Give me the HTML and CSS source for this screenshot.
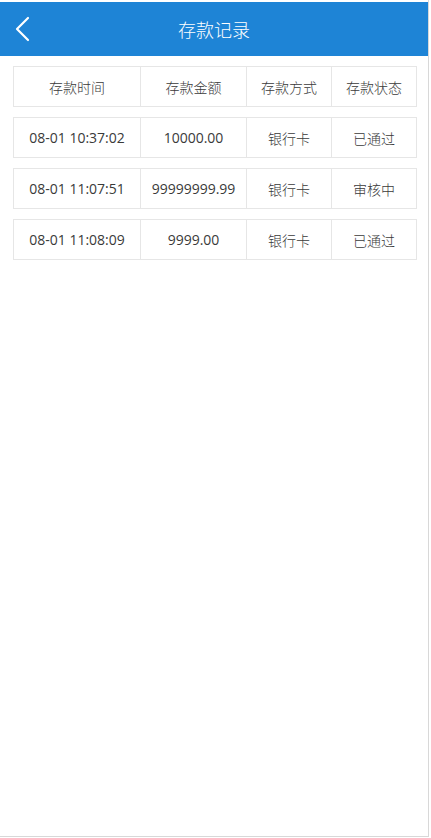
FILE: index.html
```html
<!DOCTYPE html>
<html lang="zh-CN">
<head>
    <meta charset="UTF-8">
    <meta name="viewport" content="width=device-width, initial-scale=1.0">
    <title>存款记录</title>
    <link rel="stylesheet" href="styles.css">
</head>
<body>
    <div class="page">
        <header class="topbar">
            <a class="back" href="#">
                <svg width="16" height="26" viewBox="0 0 16 26"><path d="M14 2 L3 13 L14 24" fill="none" stroke="#fff" stroke-width="2.2" stroke-linecap="round" stroke-linejoin="round"/></svg>
            </a>
            <h1>存款记录</h1>
        </header>

        <div class="records">
            <div class="row head">
                <div class="cell c1">存款时间</div>
                <div class="cell c2">存款金额</div>
                <div class="cell c3">存款方式</div>
                <div class="cell c4">存款状态</div>
            </div>
            <div class="row">
                <div class="cell c1">08-01 10:37:02</div>
                <div class="cell c2">10000.00</div>
                <div class="cell c3">银行卡</div>
                <div class="cell c4">已通过</div>
            </div>
            <div class="row">
                <div class="cell c1">08-01 11:07:51</div>
                <div class="cell c2">99999999.99</div>
                <div class="cell c3">银行卡</div>
                <div class="cell c4">审核中</div>
            </div>
            <div class="row">
                <div class="cell c1">08-01 11:08:09</div>
                <div class="cell c2">9999.00</div>
                <div class="cell c3">银行卡</div>
                <div class="cell c4">已通过</div>
            </div>
        </div>
    </div>
</body>
</html>
```

FILE: styles.css
```css
body {
    margin: 0;
    padding: 0;
    background-color: #fff;
    font-family: "Open Sans", "Noto Sans CJK SC", sans-serif;
    color: #3a3a3a;
}
.page {
    width: 429px;
    height: 837px;
    border-right: 1px solid #d8d8d8;
    border-bottom: 1px solid #d8d8d8;
    padding-top: 2px;
    box-sizing: border-box;
}
.topbar {
    position: relative;
    height: 54px;
    background-color: #1e84d6;
    display: flex;
    align-items: center;
    justify-content: center;
}
.topbar h1 {
    margin: 0;
    font-size: 18px;
    font-weight: 300;
    color: #fff;
}
.back {
    position: absolute;
    left: 14px;
    top: 14px;
    display: block;
    height: 26px;
}
.records {
    padding: 10px 12px 0 13px;
}
.row {
    display: flex;
    height: 41px;
    border: 1px solid #e6e6e6;
    box-sizing: border-box;
    margin-bottom: 10px;
    width: 404px;
}
.cell {
    display: flex;
    align-items: center;
    justify-content: center;
    font-size: 14px;
    white-space: nowrap;
    box-sizing: border-box;
}
.cell + .cell {
    border-left: 1px solid #e6e6e6;
}
.c1 { width: 126px; }
.c2 { width: 106px; }
.c3 { width: 85px; font-weight: 300; }
.c4 { width: 85px; font-weight: 300; }
.head .cell {
    font-weight: 300;
}
```
